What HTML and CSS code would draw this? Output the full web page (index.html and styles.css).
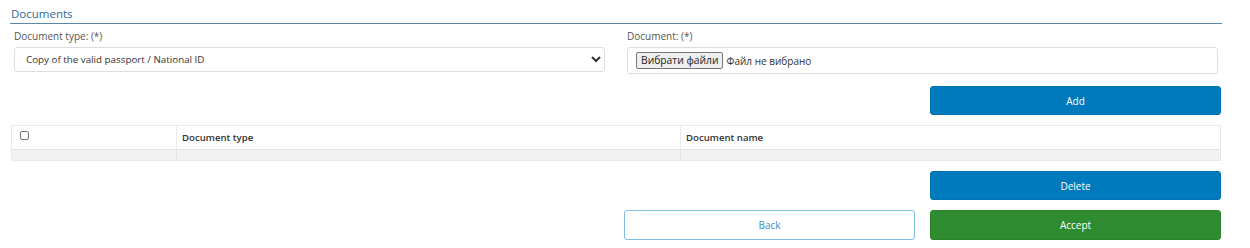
FILE: index.html
```html
<!DOCTYPE html>
<html lang="en">
<head>
<meta charset="utf-8">
<title>Documents</title>
<link rel="stylesheet" href="styles.css">
</head>
<body>
<div class="page">
  <h2 class="section-title">Documents</h2>
  <div class="form-row">
    <div class="field">
      <label class="field-label">Document type: (*)</label>
      <select class="select">
        <option>Copy of the valid passport / National ID</option>
      </select>
    </div>
    <div class="field">
      <label class="field-label">Document: (*)</label>
      <div class="file-box">
        <span class="file-btn">Вибрати файли</span>
        <span class="file-text">Файл не вибрано</span>
      </div>
    </div>
  </div>
  <div class="btn-row btn-row-add">
    <button class="btn btn-primary">Add</button>
  </div>
  <table class="doc-table">
    <thead>
      <tr>
        <th class="col-check"><span class="checkbox"></span></th>
        <th class="col-type">Document type</th>
        <th class="col-name">Document name</th>
      </tr>
    </thead>
    <tbody>
      <tr class="empty-row"><td></td><td></td><td></td></tr>
    </tbody>
  </table>
  <div class="btn-row btn-row-delete">
    <button class="btn btn-primary">Delete</button>
  </div>
  <div class="btn-row btn-row-final">
    <button class="btn btn-outline">Back</button>
    <button class="btn btn-success">Accept</button>
  </div>
</div>
</body>
</html>
```
FILE: styles.css
```css
* { box-sizing: border-box; }
body {
  margin: 0;
  font-family: "Open Sans", "Noto Sans", sans-serif;
  font-size: 10px;
  color: #333;
  background: #fff;
}
.page {
  width: 1212px;
  margin-left: 10px;
  padding-top: 6px;
}
.section-title {
  margin: 0;
  font-size: 11.5px;
  font-weight: 400;
  color: #2c6a9c;
  padding: 0 0 1px 1px;
  line-height: 16px;
  border-bottom: 1px solid #5c88a8;
}
.form-row {
  display: flex;
  gap: 22px;
  padding-left: 4px;
  margin-top: 5px;
}
.field {
  width: 591px;
  display: flex;
  flex-direction: column;
}
.field-label {
  color: #555;
  font-size: 10px;
  line-height: 14px;
  height: 18px;
}
.select {
  height: 25px;
  width: 591px;
  border: 1px solid #ddd;
  border-radius: 3px;
  background: #fff;
  font-family: inherit;
  font-size: 9.8px;
  color: #333;
  padding: 0 7px;
}
.file-box {
  height: 27px;
  border: 1px solid #ddd;
  border-radius: 3px;
  display: flex;
  align-items: center;
  padding-left: 8px;
  gap: 3px;
}
.file-btn {
  display: inline-block;
  border: 1px solid #767676;
  background: #efefef;
  border-radius: 2px;
  font-size: 10.3px;
  line-height: 15px;
  padding: 0 4px;
  color: #222;
}
.file-text { font-size: 10px; color: #333; }
.btn-row {
  display: flex;
  justify-content: flex-end;
  gap: 15px;
  padding-right: 1px;
}
.btn {
  width: 291px;
  height: 29px;
  border-radius: 3px;
  font-family: inherit;
  font-size: 10px;
  border: 1px solid transparent;
  color: #fff;
  padding: 0;
}
.btn-primary { background: #007abc; border-color: #0074b2; }
.btn-success { background: #2e8b30; border-color: #2a8229; }
.btn-outline { background: #fff; border-color: #7ec0e6; color: #3b92c6; height: 30px; }
.btn-row-add { margin-top: 12px; }
.btn-row-delete { margin-top: 10px; }
.btn-row-final { margin-top: 10px; }
.btn-row-final .btn-success { height: 30px; }
.doc-table {
  margin-top: 10px;
  margin-left: 1px;
  width: 1210px;
  border-collapse: collapse;
  border: 1px solid #eaeaea;
}
.doc-table th {
  height: 24px;
  text-align: left;
  font-weight: 600;
  font-size: 9.6px;
  color: #333;
  padding: 0 5px;
  border-right: 1px solid #eaeaea;
  border-bottom: 1px solid #e3e3e3;
  background: #fff;
}
.col-check { width: 165px; padding-left: 8px !important; }
.col-type { width: 504px; }
.empty-row td {
  height: 11px;
  background: #f2f2f2;
  border-right: 1px solid #e3e3e3;
  padding: 0;
}
.checkbox {
  display: inline-block;
  width: 9px;
  height: 9px;
  border: 1px solid #767676;
  border-radius: 2px;
  background: #fff;
  vertical-align: middle;
  position: relative;
  top: -3px;
}
```
